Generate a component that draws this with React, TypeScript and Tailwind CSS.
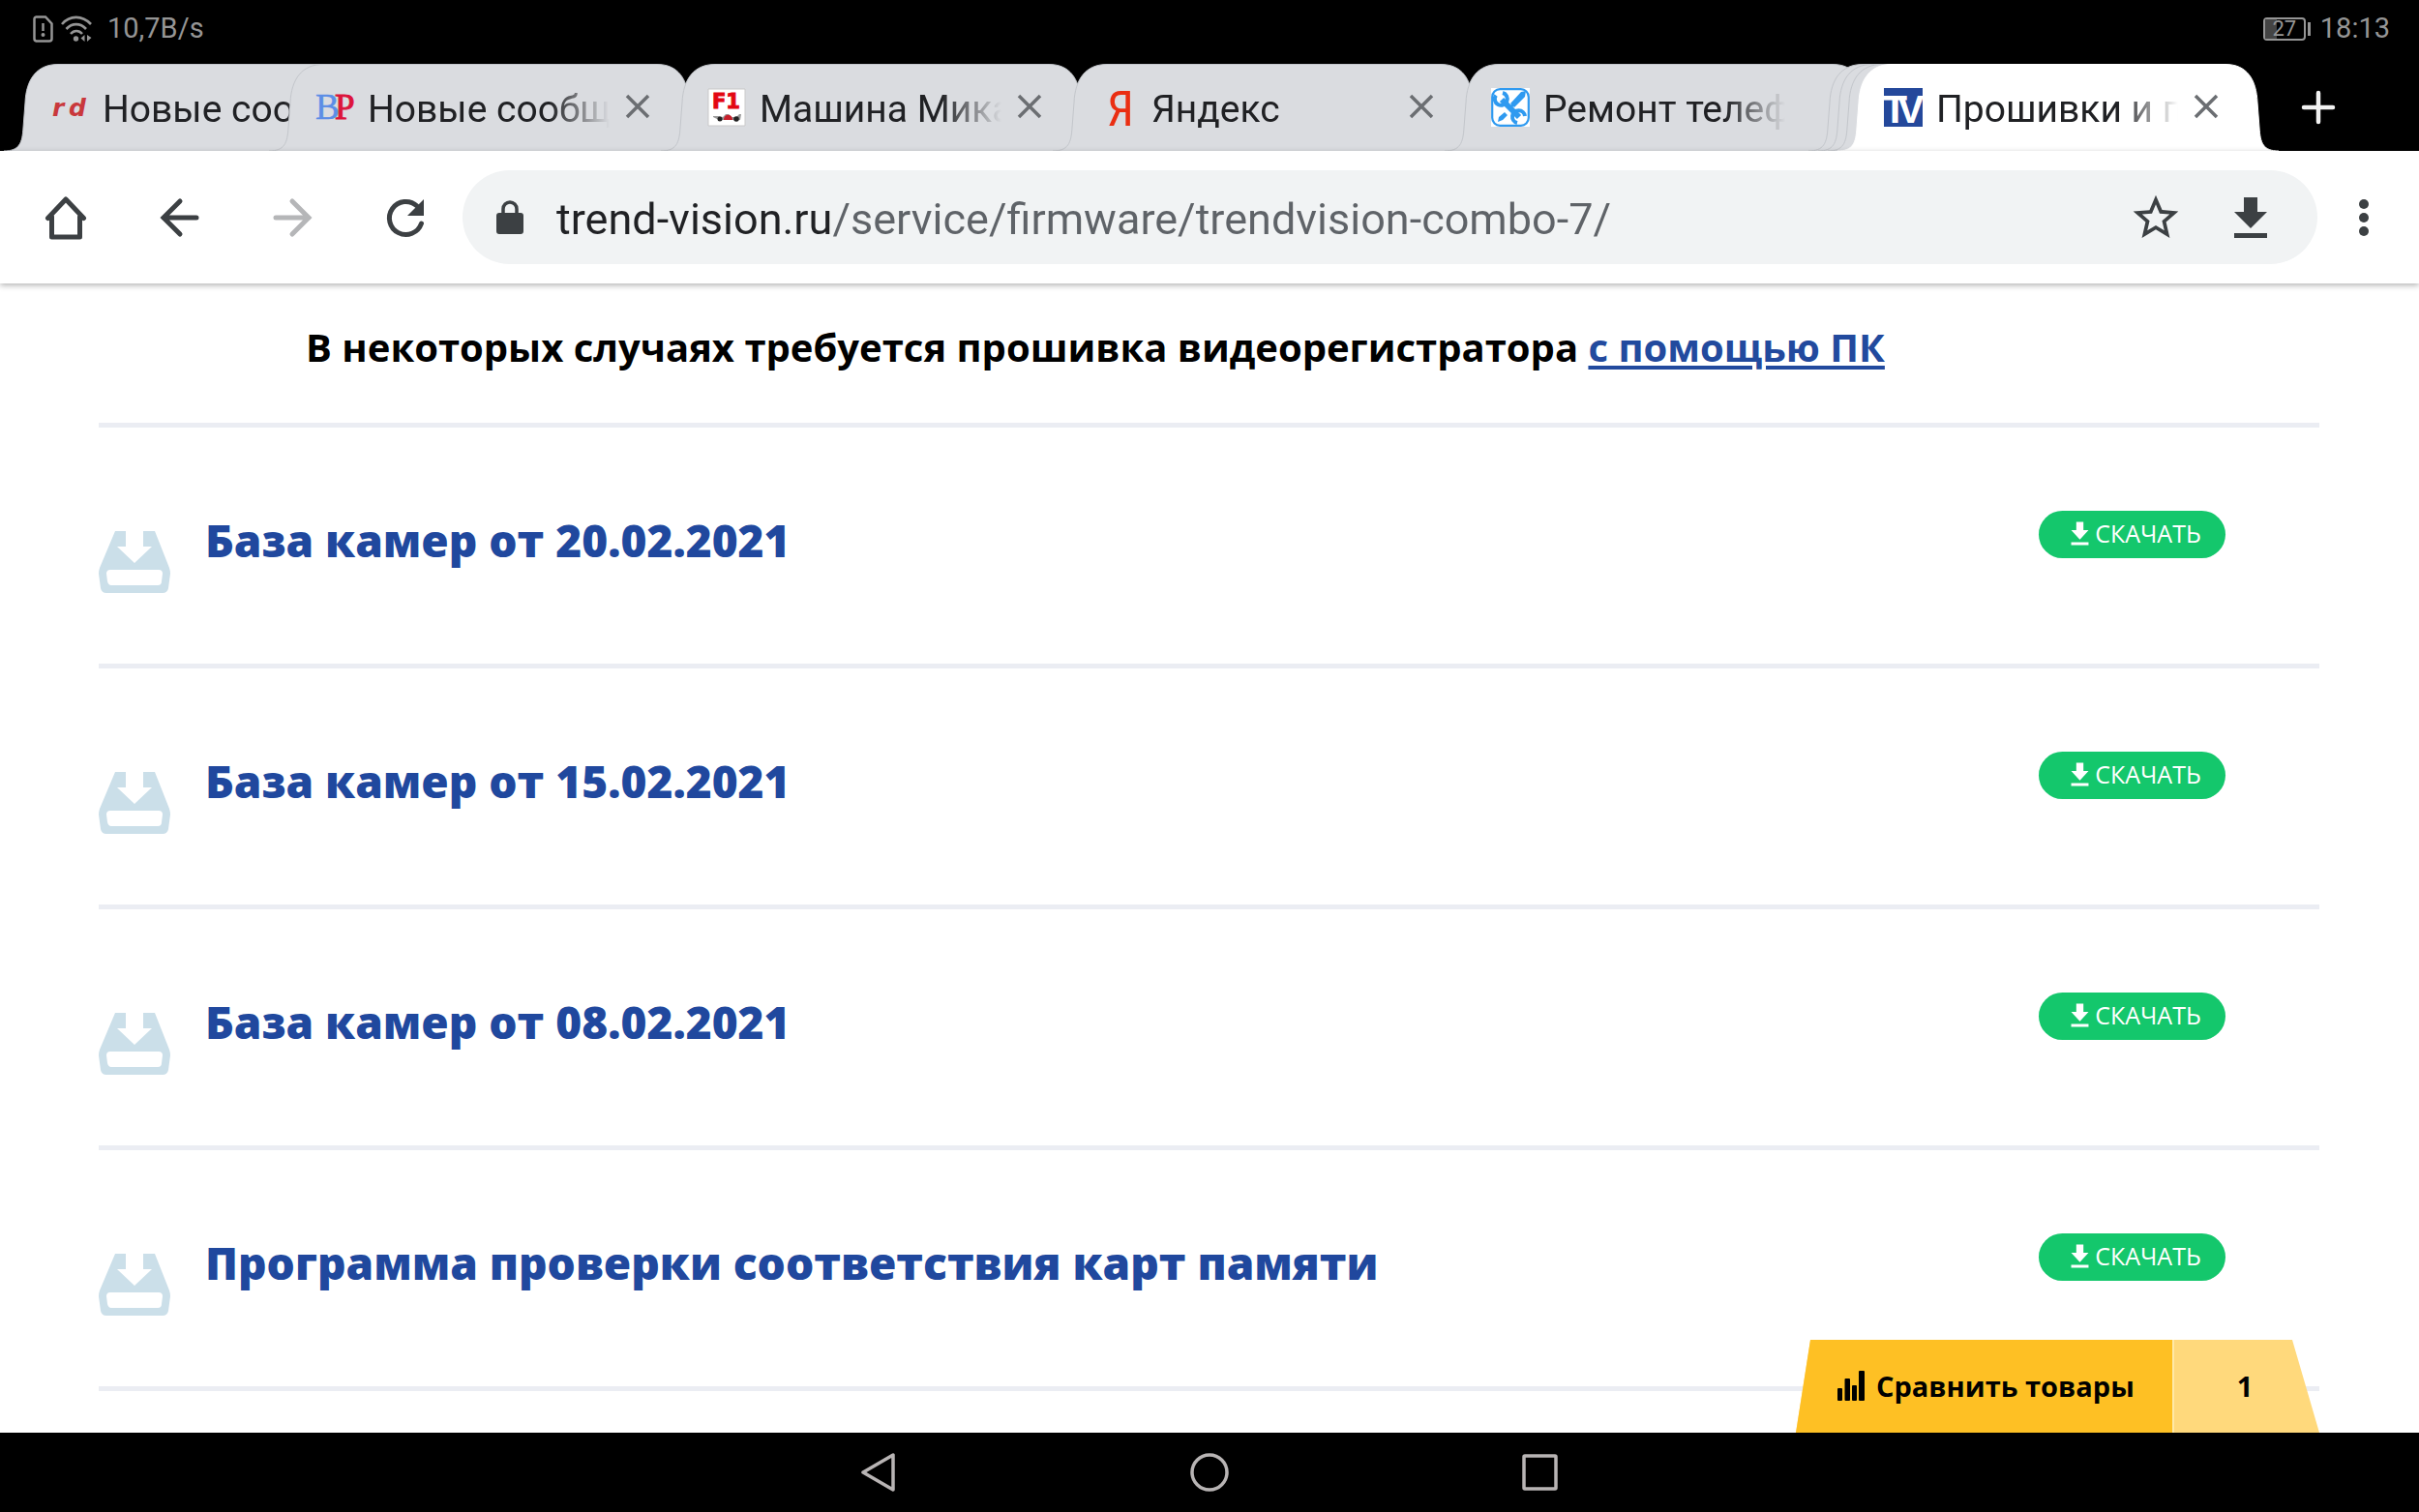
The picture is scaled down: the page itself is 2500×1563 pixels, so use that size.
import type { ReactNode } from "react";
import { MdStarBorder } from "react-icons/md";

type TabData = {
  title: string;
  icon: ReactNode;
  spacing: string;
  closable?: boolean;
  active?: boolean;
};

const tabs: TabData[] = [
  { title: "Новые сообщения", icon: <RdIcon />, spacing: "ml-1" },
  { title: "Новые сообщения", icon: <BpIcon />, spacing: "-ml-[183px]", closable: true },
  { title: "Машина Мика", icon: <F1Icon />, spacing: "-ml-[52px]", closable: true },
  { title: "Яндекс", icon: <YandexIcon />, spacing: "-ml-[52px]", closable: true },
  { title: "Ремонт телефонов", icon: <RepairIcon />, spacing: "-ml-[52px]" },
  { title: "", icon: null, spacing: "-ml-[81px]" },
  { title: "", icon: null, spacing: "-ml-[447px]" },
  { title: "", icon: null, spacing: "-ml-[447px]" },
  { title: "Прошивки и программы", icon: <TvIcon />, spacing: "-ml-[447px]", closable: true, active: true },
];

const files = [
  "База камер от 20.02.2021",
  "База камер от 15.02.2021",
  "База камер от 08.02.2021",
  "Программа проверки соответствия карт памяти",
];

export default function App() {
  return (
    <div className="flex h-screen flex-col overflow-hidden bg-black font-[Roboto,sans-serif]">
      <StatusBar />
      <TabStrip />
      <Toolbar />
      <Page />
      <NavBar />
    </div>
  );
}

function StatusBar() {
  return (
    <div className="flex h-[66px] shrink-0 items-center justify-between pr-[30px] pb-[6px] pl-[34px] text-[29px] text-[#959595]">
      <div className="flex items-center">
        <svg viewBox="0 0 21 28" className="h-7 w-[21px]" fill="none" stroke="currentColor" strokeWidth="2.5">
          <path d="M3 1.5h10l6.5 7V24a2.500 2.500 0 0 1-2.500 2.500H3.500A2.500 2.500 0 0 1 1.500 24V3.500a2 2 0 0 1 2-2Z" />
          <path d="M10.500 8v8" />
          <circle cx="10.500" cy="20" r="2" fill="currentColor" stroke="none" />
        </svg>
        <svg viewBox="0 0 32 28" className="ml-2 h-7 w-8" fill="none" stroke="currentColor" strokeWidth="2.6">
          <path d="M1 9C9-.5 22-.5 31 9" />
          <path d="M5.500 14c6-6.500 14.500-6.500 20.500 0" />
          <path d="M10 19c3.500-4 8.500-4 12 0" />
          <circle cx="15.500" cy="24" r="2.700" fill="currentColor" stroke="none" />
          <path d="M24.500 20v7l-4-3.500zM27 20v7l4.500-4z" fill="currentColor" stroke="none" />
        </svg>
        <span className="ml-4">10,7B/s</span>
      </div>
      <div className="flex items-center">
        <div className="relative flex h-6 w-11 items-center justify-center rounded border-2 border-[#959595] text-[22px] leading-none">
          <span className="absolute inset-y-0 left-0 w-3 bg-[#444]" />
          <span className="relative">27</span>
        </div>
        <span className="ml-[2px] h-[14px] w-[3px] bg-[#959595]" />
        <span className="ml-[10px]">18:13</span>
      </div>
    </div>
  );
}

function TabStrip() {
  return (
    <div className="flex h-[90px] shrink-0">
      {tabs.map((tab, i) => (
        <Tab key={i} {...tab} />
      ))}
      <button aria-label="Новая вкладка" className="ml-[22px] flex items-center text-[#f1f1f1]">
        <svg viewBox="0 0 36 36" className="size-9" fill="none" stroke="currentColor" strokeWidth="4.500" strokeLinecap="round">
          <path d="M18 3v30M3 18h30" />
        </svg>
      </button>
    </div>
  );
}

function Tab({ title, icon, spacing, closable, active }: TabData) {
  return (
    <div className={`relative flex w-[457px] shrink-0 items-center pl-12 ${spacing}`}>
      <svg viewBox="0 0 457 90" className="absolute inset-0 size-full">
        <path
          d="M0 90C16 90 19 82 20 66L22 40C23 16 34 .5 56 .5H401C423 .5 433 16 434 40L436 66C437 82 440 90 456 90"
          fill={active ? "#fff" : "#dadce0"}
          stroke={active ? "#fff" : "#c3c6cb"}
        />
      </svg>
      <div className="relative size-10">{icon}</div>
      <span className="relative ml-[14px] w-[250px] overflow-hidden pt-1 text-[39px] leading-[50px] whitespace-nowrap text-[#202124] mask-r-from-75% mask-r-to-100%">
        {title}
      </span>
      {closable && (
        <button aria-label="Закрыть" className="relative ml-[15px] text-[#6b6e72]">
          <svg viewBox="0 0 28 28" className="size-7" fill="none" stroke="currentColor" strokeWidth="3.500">
            <path d="M3 2 25 24M25 2 3 24" />
          </svg>
        </button>
      )}
    </div>
  );
}

function RdIcon() {
  return (
    <svg viewBox="0 0 40 40" className="size-10" fill="#c9383c" fontFamily="DejaVu Sans, sans-serif" fontStyle="italic" fontWeight="700" fontSize="25">
      <text x="2" y="29">r</text>
      <text x="19" y="29">d</text>
    </svg>
  );
}

function BpIcon() {
  return (
    <svg viewBox="0 0 40 40" className="size-10" fontFamily="Liberation Serif, serif" fontSize="37">
      <text x="0" y="32" fill="#5c8ee6" stroke="#5c8ee6" strokeWidth="0.500">B</text>
      <text x="20" y="32" fill="#dc143c" stroke="#dc143c">P</text>
    </svg>
  );
}

function F1Icon() {
  return (
    <svg viewBox="0 0 40 40" className="size-10">
      <path d="M1 1h38v38H1z" fill="#fff" stroke="#c9c9c9" />
      <text x="5" y="21" fill="#e30613" stroke="#e30613" fontFamily="DejaVu Sans, sans-serif" fontWeight="700" fontSize="21">F1</text>
      <path d="M6 29h6l4 1 3-3h3l3 3h5l3-3h2l-1 6H12l-6-3z" fill="#999" />
      <path d="M17 33c0-7 9-7 9 0z" fill="#c8202c" />
      <circle cx="13" cy="32" r="2.500" fill="#222" />
      <circle cx="30" cy="32" r="2.800" fill="#222" />
    </svg>
  );
}

function YandexIcon() {
  return (
    <svg viewBox="0 0 40 40" className="size-10 overflow-visible">
      <text x="8" y="39" fill="#ea2e12" fontFamily="Roboto Condensed, Liberation Sans Narrow, Roboto, sans-serif" fontSize="50">Я</text>
    </svg>
  );
}

function RepairIcon() {
  return (
    <svg viewBox="0 0 40 40" className="size-10" fill="none" stroke="#2f9af0">
      <path d="M0 0h40v40H0z" fill="#fff" stroke="none" />
      <rect x="1.200" y="1.200" width="37.600" height="37.600" rx="8" strokeWidth="2.200" />
      <path d="m11 12 18 18" strokeWidth="6" />
      <path d="M5 7.500a6.500 6.500 0 1 0 7-2.500M27 36a6.500 6.500 0 1 1 8-7" strokeWidth="4" />
      <path d="m19 21 6-6" strokeWidth="3" />
      <path d="m20 16 11-12 5-1-1 6-11 11zM8 30l6-5 3 3-5 5-5 2z" fill="#2f9af0" stroke="none" />
    </svg>
  );
}

function TvIcon() {
  return (
    <svg viewBox="0 0 40 40" className="size-10" fill="#fff" fontFamily="Liberation Sans, sans-serif" fontWeight="700" fontSize="41">
      <path d="M0 0h40v40H0z" fill="#24489b" />
      <text x="-1" y="36">T</text>
      <text x="14" y="36">V</text>
    </svg>
  );
}

function Toolbar() {
  return (
    <div className="relative z-10 flex h-[137px] shrink-0 items-center bg-white pl-[46px] text-[#3c4043] shadow-[0_2px_6px_rgba(0,0,0,0.3)]">
      <div className="flex items-center gap-[73px]">
        <button aria-label="Главная">
          <svg viewBox="0 0 44 46" className="h-[46px] w-11" fill="none" stroke="currentColor" strokeWidth="5" strokeLinejoin="round" strokeLinecap="round">
            <path d="M3.500 23.500 22 4l18.500 19.500M7.500 22v21h29V22" />
          </svg>
        </button>
        <button aria-label="Назад">
          <svg viewBox="0 0 44 46" className="h-[46px] w-11" fill="none" stroke="currentColor" strokeWidth="5" strokeLinecap="round">
            <path d="M23 6 6 23l17 17M6 23h34" />
          </svg>
        </button>
        <button aria-label="Вперёд" className="text-[#b5b6b8]">
          <svg viewBox="0 0 44 46" className="h-[46px] w-11" fill="none" stroke="currentColor" strokeWidth="5" strokeLinecap="round">
            <path d="m22 6 17 17-17 17M39 23H5" />
          </svg>
        </button>
        <button aria-label="Обновить">
          <svg viewBox="0 0 44 46" className="h-[46px] w-11" fill="none" stroke="currentColor" strokeWidth="5" strokeLinecap="round">
            <path d="M38.500 29A17 17 0 1 1 34 11" />
            <path d="M41 4v17H24z" fill="currentColor" stroke="none" />
          </svg>
        </button>
      </div>
      <div className="ml-[37px] flex h-[97px] flex-1 items-center rounded-full bg-[#f1f3f4] pr-[51px] pl-[35px]">
        <svg viewBox="0 0 28 36" className="h-9 w-7">
          <rect x="0" y="13" width="28" height="22" rx="3" fill="currentColor" />
          <path d="M7 14V9a7 7 0 0 1 14 0v5" fill="none" stroke="currentColor" strokeWidth="3.500" />
        </svg>
        <input
          aria-label="Адрес страницы"
          defaultValue="trend-vision.ru/service/firmware/trendvision-combo-7/"
          className="ml-[34px] h-20 min-w-0 flex-1 bg-linear-[to_right,#202124_284px,#5f6368_284px] bg-clip-text pt-1 text-[45px] text-transparent outline-none"
        />
        <button aria-label="В избранное">
          <MdStarBorder className="size-14" />
        </button>
        <button aria-label="Скачать страницу" className="ml-[52px]">
          <DownloadIcon className="h-11 w-9" />
        </button>
      </div>
      <button aria-label="Меню" className="mr-[51px] ml-[42px]">
        <svg viewBox="0 0 12 40" className="h-10 w-3" fill="currentColor">
          <circle cx="6" cy="6" r="5" />
          <circle cx="6" cy="20" r="5" />
          <circle cx="6" cy="34" r="5" />
        </svg>
      </button>
    </div>
  );
}

function DownloadIcon({ className }: { className: string }) {
  return (
    <svg viewBox="0 0 36 44" className={className} fill="currentColor" preserveAspectRatio="none">
      <path d="M35 16H25V1H11v15H1l17 17zM1 38v5h34v-5z" />
    </svg>
  );
}

function Page() {
  return (
    <main className="relative flex-1 overflow-hidden bg-white pr-[103px] pl-[102px] font-['Open_Sans','Noto_Sans',sans-serif]">
      <p className="flex h-36 items-center pb-3 pl-[214px] text-[40px] font-bold whitespace-pre text-black">
        В некоторых случаях требуется прошивка видеорегистратора{" "}
        <a href="#pc" className="text-[#224a9e] underline decoration-4 underline-offset-4">
          с помощью ПК
        </a>
      </p>
      <ul className="border-t-5 border-[#ebedf3]">
        {files.map((name) => (
          <FileRow key={name} name={name} />
        ))}
      </ul>
      <CompareBar />
    </main>
  );
}

function FileRow({ name }: { name: string }) {
  return (
    <li className="flex h-[249px] items-start border-b-5 border-[#ebedf3] pr-[97px]">
      <svg viewBox="0 0 74 64" className="mt-[107px] h-16 w-[74px]">
        <path
          d="M17 0h11v16h-9l18 17 18-17h-9V0h12l15 38q1 3 1 6l-2 15q-1 5-6 5H8q-5 0-6-5L0 44q0-3 1-6zM12 40q-4 0-4 4l1 8q1 4 4 4h48q4 0 4-4l1-8q0-4-4-4z"
          fill="#cbdfe9"
          fillRule="evenodd"
        />
      </svg>
      <h2 className="mt-[84px] ml-9 flex-1 text-[46px] leading-[64px] font-extrabold text-[#20489e]">{name}</h2>
      <button className="mt-[86px] flex h-[49px] w-[193px] items-center justify-center gap-[6px] rounded-full bg-[#14c76c] pb-[2px] pl-2 text-[25px] text-white">
        <DownloadIcon className="h-[25px] w-[19px]" />
        СКАЧАТЬ
      </button>
    </li>
  );
}

function CompareBar() {
  return (
    <div className="absolute right-[103px] bottom-0 flex h-24 w-[541px] bg-[#ffd97c] text-[29px] font-bold text-black [clip-path:polygon(15px_0,513px_0,100%_100%,0_100%)]">
      <button className="flex w-[391px] items-center gap-3 border-r-2 border-[#ffe9a8] bg-[#fec024] pl-[43px]">
        <svg viewBox="0 0 28 32" className="h-8 w-7" fill="currentColor">
          <rect x="0" y="18" width="5" height="13" rx="1" />
          <rect x="7.500" y="8" width="5.500" height="23" rx="1" />
          <rect x="15" y="15" width="5" height="16" rx="1" />
          <rect x="22" y="0" width="6" height="31" rx="1" />
        </svg>
        Сравнить товары
      </button>
      <span className="flex w-[146px] items-center justify-center">1</span>
    </div>
  );
}

function NavBar() {
  return (
    <nav className="flex h-[82px] shrink-0 items-center justify-center gap-[302px] bg-black text-[#b8b4b4]">
      <button aria-label="Назад">
        <svg viewBox="0 0 40 42" className="h-[42px] w-10" fill="none" stroke="currentColor" strokeWidth="3.500" strokeLinejoin="round">
          <path d="M35 3v36L4 21z" />
        </svg>
      </button>
      <button aria-label="Домой">
        <svg viewBox="0 0 40 42" className="h-[42px] w-10" fill="none" stroke="currentColor" strokeWidth="3.500">
          <circle cx="20" cy="21" r="18" />
        </svg>
      </button>
      <button aria-label="Недавние">
        <svg viewBox="0 0 40 42" className="h-[42px] w-10" fill="none" stroke="currentColor" strokeWidth="3.500">
          <rect x="3" y="4" width="33" height="34" rx="1" />
        </svg>
      </button>
    </nav>
  );
}
